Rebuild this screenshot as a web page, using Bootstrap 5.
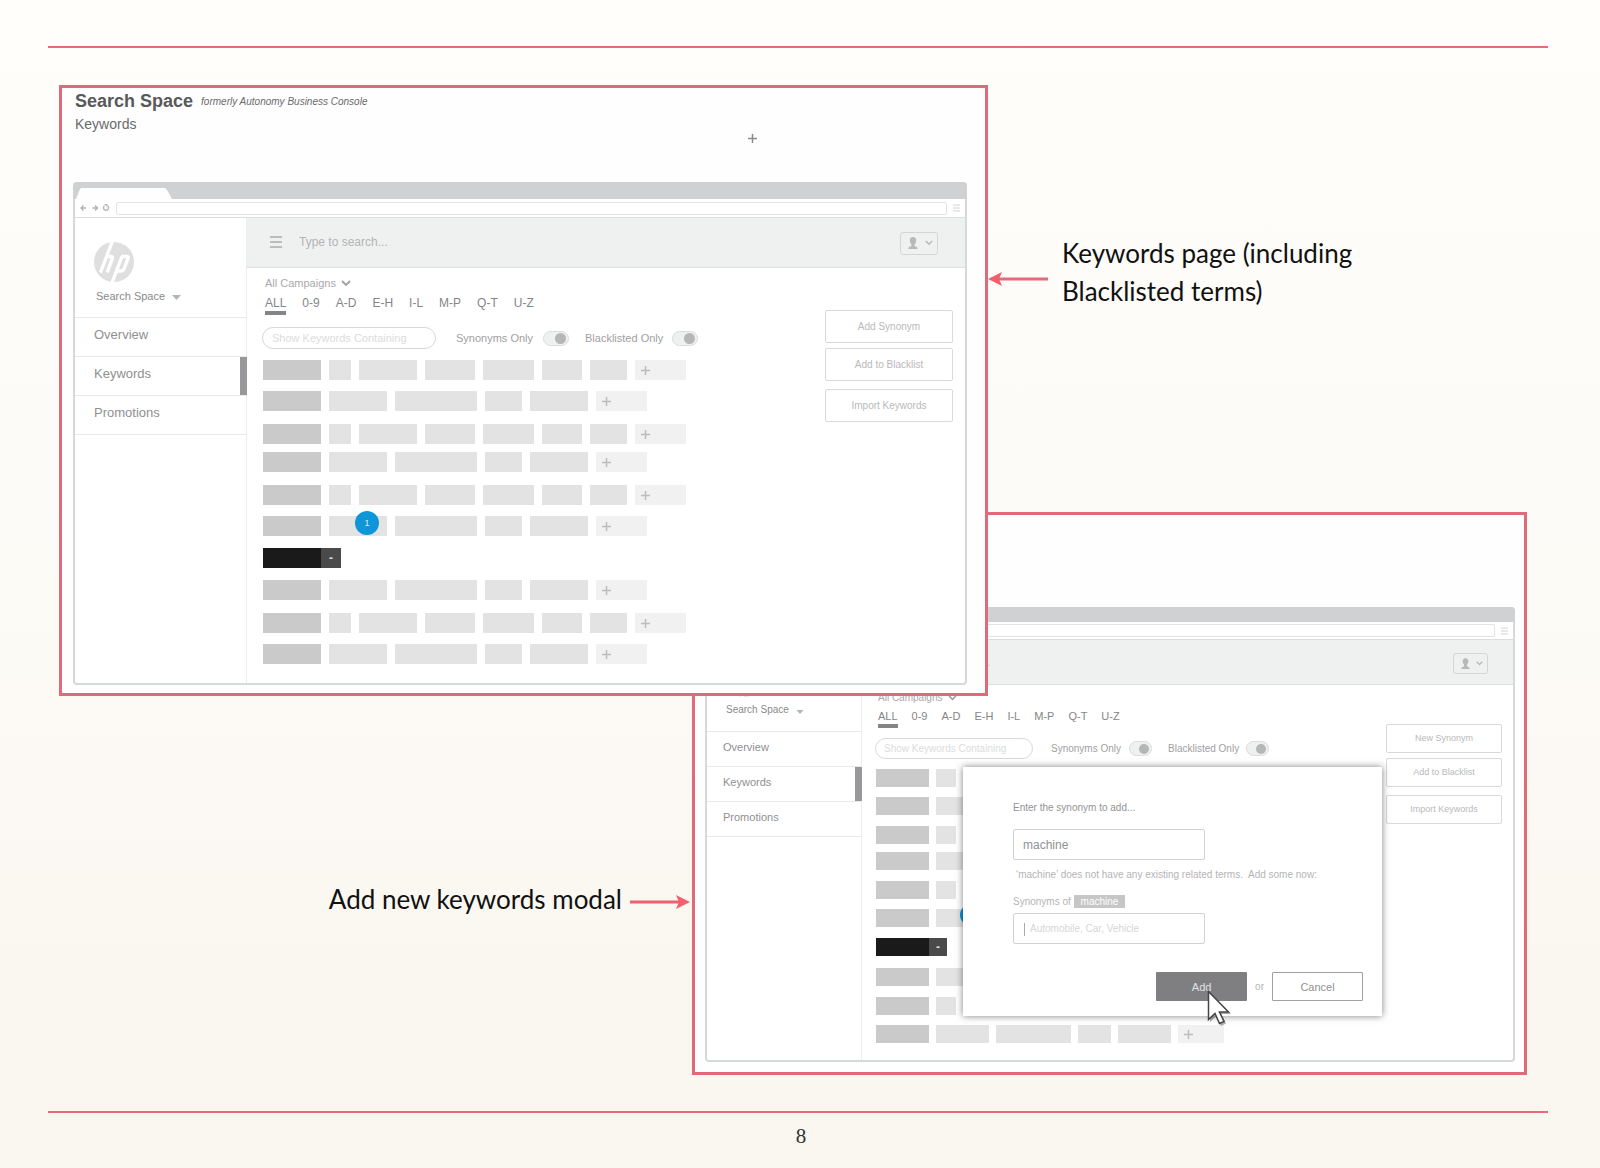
<!DOCTYPE html>
<html lang="en">
<head>
<meta charset="utf-8">
<meta name="viewport" content="width=device-width, initial-scale=1">
<title>Search Space – Keywords</title>
<link href="https://cdn.jsdelivr.net/npm/bootstrap@5.3.0/dist/css/bootstrap.min.css" rel="stylesheet">
<style>
  :root { --accent: #e66a78; }
  body {
    min-height: 100vh;
    padding: 46px 52px 0 48px;
    background: linear-gradient(#fffefa, #fdfbf7 45%, #faf7f0 85%, #faf7f1);
    font-family: "Liberation Sans", Arial, sans-serif;
    color: #58595b;
  }
  button, input, select { font-family: inherit; }
  .rule { height: 2px; background: var(--accent); }
  .stage { display: grid; grid-template-columns: 11fr 633fr 296fr 539fr 21fr; padding-bottom: 36px; }
  .stage > * { grid-row: 1; align-self: start; min-width: 0; }
  .pageno { font: 21px/26px "Liberation Serif", serif; color: #333; padding: 10px 0 0 6px; }

  /* callouts */
  .callout { font: 26px/38px Lato, sans-serif; color: #111; }
  .callout svg { flex: none; }
  .callout-page { grid-column: 4; margin-top: 186px; }
  .callout-page svg { margin-top: 38px; }
  .callout-page p { max-width: 320px; margin-left: 14px; }
  .callout-modal { grid-column: 2; margin-top: 832px; padding-right: 2px; }
  .callout-modal svg { margin-top: 15px; }

  /* wireframe, large size */
  .wire {
    --text: 11px; --line: 16px; --tabs: 12px; --nav: 13px; --search: 12px; --act: 10px;
    --gap: 8px; --chip-h: 20px; --a: 58px; --b: 22px; --c: 50px; --d: 51px; --e: 40px; --f: 37px; --g: 82px;
    --side: 172px; --strip: 17px; --url: 19px; --bar: 50px; --logo: 40px; --row: 39px;
    --field: 22px; --sw: 26px; --knob: 11px; --act-w: 128px; --act-h: 33px;
    border: 3px solid #e0697a; background: #fefefe;
  }
  .wire-lg { grid-column: 2 / 4; margin-top: 37px; z-index: 2; padding: 0 18px 8px 11px; }
  .wire-sm {
    --text: 10px; --line: 14px; --tabs: 11px; --nav: 11px; --search: 11px; --act: 9px;
    --gap: 7px; --chip-h: 18px; --a: 53px; --b: 20px; --c: 45px; --d: 46px; --e: 36px; --f: 33px; --g: 75px;
    --side: 155px; --strip: 15px; --url: 18px; --bar: 45px; --logo: 36px; --row: 35px;
    --field: 21px; --sw: 23px; --knob: 10px; --act-w: 116px; --act-h: 29px;
    grid-column: 3 / 5; margin-top: 464px; padding: 92px 9px 10px 10px;
  }
  .wire-head { height: 94px; padding: 3px 0 0 2px; position: relative; }
  .wire-head h1 { font-size: 18px; line-height: 20px; font-weight: 700; margin: 0; }
  .wire-head em { font-size: 10px; line-height: 22px; color: #6a6a6c; }
  .wire-head p { font-size: 14px; line-height: 22px; margin: 0; color: #6a6a6c; }
  .wire-head svg { position: absolute; left: 75.500%; top: 46px; }

  .browser { border: 2px solid #d6d9da; border-top: 0; border-radius: 4px; background: #fff; }
  .strip { height: var(--strip); background: #d0d1d2; border-radius: 4px 4px 0 0; margin: 0 -2px; padding-left: 3px; }
  .urlbar { height: var(--url); border-bottom: 1px solid #dcdfe0; padding: 0 5px; gap: 6px; }
  .urlbar input { height: 13px; min-width: 0; border: 1px solid #e3e3e3; border-radius: 2px; background: #fff; padding: 0; }
  .side { width: var(--side); flex: none; border-right: 1px solid #eceeee; }
  .side-head { padding: 24px 0 13px 19px; border-bottom: 1px solid #eaeaea; }
  .wire-sm .side-head { padding-top: 21px; padding-bottom: 14px; }
  .logo-art { width: var(--logo); height: var(--logo); display: block; margin-bottom: 6px; }
  .plainbtn { border: 0; background: none; padding: 0; color: #8a8a8c; font-size: var(--text); line-height: var(--line); }
  .side-head .plainbtn { margin-left: 2px; display: flex; align-items: center; gap: 7px; }
  .wire-sm .side-head .plainbtn { margin-left: 0; }
  .side-head .plainbtn svg { margin-top: 3px; }
  .side-link {
    display: flex; align-items: center; height: var(--row); padding: 0 0 4px 19px;
    border-bottom: 1px solid #eaeaea; color: #8f8f91; font-size: var(--nav); text-decoration: none;
  }
  .wire-sm .side-link { padding-left: 16px; }
  .side-link.current { background: linear-gradient(#98989a, #98989a) right / 7px 100% no-repeat; margin-right: -1px; }
  .topbar { height: var(--bar); background: #eff1f1; border-bottom: 1px solid #dcdfe0; padding: 0 27px 2px 23px; }
  .wire-sm .topbar { padding: 0 25px 0 21px; }
  .topbar input { border: 0; background: none; font-size: var(--search); color: #aaa; padding: 0; margin-left: 17px; min-width: 0; }
  .wire-sm .topbar input { margin-left: 15px; }
  .topbar input::placeholder { color: #b4b4b4; opacity: 1; }
  .usermenu { width: 38px; height: 23px; border: 1px solid #d3d5d6; border-radius: 3px; background: none; padding: 0 4px 0 7px; margin-top: 3px; }
  .wire-sm .usermenu { width: 35px; height: 21px; }

  .board { padding: 7px 0 19px 15px; }
  .wire-sm .board { padding: 6px 0 17px 13px; }
  .campaign { margin-left: 3px; height: var(--line); }
  .campaign select { appearance: none; border: 0; background: none; padding: 0; margin-right: 5px; color: #a9a9ab; font-size: var(--text); line-height: var(--line); }
  .letters { margin: 4px 0 0 3px; gap: 16px; font-size: var(--tabs); line-height: 16px; }
  .wire-sm .letters { gap: 14px; line-height: 15px; }
  .letters a { color: #858587; text-decoration: none; border-bottom: 4px solid transparent; }
  .letters a.current { border-color: #858587; }
  .filters { margin: 12px 0 11px; height: var(--field); font-size: var(--text); color: #a0a0a2; }
  .wire-sm .filters { margin: 10px 0; }
  .filters input[type=text] { width: 174px; height: var(--field); border: 1px solid #d8d8d8; border-radius: 11px; padding: 0 9px; margin-right: 20px; background: #fff; }
  .wire-sm .filters input[type=text] { width: 158px; margin-right: 18px; padding: 0 8px; }
  .filters input::placeholder { color: #dcdcdc; opacity: 1; }
  .filters label { width: 87px; }
  .filters label.wide { margin-left: 16px; }
  .wire-sm .filters label { width: 78px; }
  .switch { appearance: none; width: var(--sw); height: 15px; margin: 0; border: 1px solid #dadcdd; border-radius: 8px; background: #eff0f0;
            display: flex; align-items: center; justify-content: flex-end; padding-right: 2px; }
  .switch::before { content: ""; width: var(--knob); height: var(--knob); border-radius: 50%; background: #b6b6b7; }

  .terms { margin-left: 1px; }
  .term-row { display: flex; gap: var(--gap); margin-top: 13px; position: relative; }
  .term-row.short { margin-top: 11px; }
  .term-row.tight { margin-top: 8px; }
  .term-row.black, .term-row.black + .short { margin-top: 12px; }
  .wire-sm .term-row { margin-top: 11px; }
  .wire-sm .term-row.short { margin-top: 10px; }
  .wire-sm .term-row.tight { margin-top: 8px; }
  .wire-sm .term-row.black + .short { margin-top: 12px; }
  .wire .term-row:first-child { margin-top: 0; }
  .wire .term-row.black { gap: 0; }
  .chip { height: var(--chip-h); background: #e3e3e3; border: 0; padding: 0; flex: none; }
  .chip.head { background: #cacaca; }
  .chip.dark { background: #1a1a1a; }
  .chip.minus { width: 20px; background: #4a4a4a; color: #ddd; font-size: 12px; font-weight: 700; line-height: 1; }
  .wire-sm .chip.minus { width: 18px; }
  .chip.plus { background: #f1f1f1; padding-left: 6px; display: flex; align-items: center; }
  .s-a { width: var(--a); } .s-b { width: var(--b); } .s-c { width: var(--c); } .s-d { width: var(--d); }
  .s-e { width: var(--e); } .s-f { width: var(--f); } .s-g { width: var(--g); }
  .pin { position: absolute; left: 92px; top: -5px; width: 24px; height: 24px; border-radius: 50%; background: #0d96d8; color: #d8f0fb; font-size: 9px; line-height: 24px; text-align: center; }
  .wire-sm .pin { left: 84px; width: 22px; height: 22px; line-height: 22px; }

  .actions { width: var(--act-w); flex: none; margin: 42px 12px 0 0; }
  .wire-sm .actions { margin: 39px 11px 0 0; }
  .actions button { height: var(--act-h); border: 1px solid #d9d9d9; border-radius: 2px; background: #fff; color: #b9b9bb; font-size: var(--act); padding: 0; margin-bottom: 5px; }
  .actions button:nth-child(2) { margin-bottom: 8px; }

  /* dialog over the small wireframe */
  .dialog { position: absolute; left: 101px; top: 127px; width: 419px; padding: 33px 19px 15px 50px; background: #fff; box-shadow: 0 0 7px rgba(0,0,0,.5); font-size: 10px; line-height: 16px; color: #b4b4b6; z-index: 1; }
  .dialog .prompt { display: block; color: #939395; }
  .dialog .entry { display: block; width: 192px; height: 31px; border: 1px solid #d2d2d2; border-radius: 2px; background: #fff; color: #919193; font-size: 12px; padding: 0 9px; margin-top: 13px; }
  .dialog .related { margin: 7px 0 11px; padding-left: 3px; white-space: pre; }
  .dialog .token { background: #c6c6c6; color: #fff; padding: 0 7px; line-height: 13px; }
  .dialog .entry-wrap { position: relative; margin-top: 3px; }
  .dialog .entry-wrap .entry { margin: 0; font-size: 10px; padding-left: 16px; }
  .dialog .entry-wrap::before { content: ""; position: absolute; left: 11px; top: 10px; width: 1px; height: 13px; background: #aaa; }
  .dialog .entry::placeholder { color: #d6d6d6; opacity: 1; }
  .dialog .buttons { margin-top: 28px; gap: 8px; position: relative; }
  .dialog .buttons button { width: 91px; height: 29px; border-radius: 1px; font-size: 11px; padding: 0; }
  .ok { background: #7f7f81; border: 0; color: #e2e2e2; }
  .no { background: #fff; border: 1px solid #a0a0a0; color: #919193; }
  .pointer { position: absolute; right: 130px; top: 18px; }
</style>
</head>
<body>
<svg class="d-none">
  <symbol id="hp" viewBox="0 0 40 40">
    <circle cx="20" cy="20" r="20" fill="#dfdfdf"/>
    <g fill="none" stroke="#fff" stroke-width="3.4">
      <path d="M18.5-1 6.5 30.500M12.500 14.500h4.200q2.300 0 1.600 2.200L13.200 30.500"/>
      <path d="M28 14.500 17.500 42M27 14.500h5.500q2.200 0 1.500 2.200L30.200 26.500q-.8 2.500-3.200 2.500H22"/>
    </g>
  </symbol>
  <symbol id="lines" viewBox="0 0 12 12"><path d="M0 1h12M0 6h12M0 11h12" stroke="currentColor" stroke-width="1.500"/></symbol>
  <symbol id="chev" viewBox="0 0 10 7"><path d="M1 1l4 4 4-4" fill="none" stroke="currentColor" stroke-width="1.800"/></symbol>
  <symbol id="caret" viewBox="0 0 9 5"><path d="M0 0h9L4.500 5z" fill="currentColor"/></symbol>
  <symbol id="user" viewBox="0 0 10 13"><path d="M5 0c2.200 0 3.300 1.500 3.200 3.500C8.100 5.500 7.200 6.500 6.600 7.300v1.500c.3.800 3 .8 3 3.200H.4c0-2.400 2.700-2.400 3-3.200V7.300C2.800 6.500 1.900 5.500 1.800 3.500 1.700 1.500 2.800 0 5 0z" fill="currentColor"/></symbol>
  <symbol id="plus" viewBox="0 0 9 9"><path d="M4.500 0v9M0 4.500h9" stroke="currentColor" stroke-width="1.500"/></symbol>
  <symbol id="nav" viewBox="0 0 30 8">
    <g fill="none" stroke="#b4b4b4" stroke-width="1.400"><path d="M6 4H1.500M3.500 1.500 1 4l2.500 2.500M12.500 4H17M15 1.500 17.500 4 15 6.500"/><path d="M24.500 1.800a2.500 2.500 0 1 0 3 0"/></g><path d="M24 0h3.500v3z" fill="#b4b4b4"/>
  </symbol>
</svg>

<div class="rule"></div>
<main class="stage">

  <section class="wire wire-lg">
    <header class="wire-head">
      <div class="d-flex gap-2"><h1>Search Space</h1><em>formerly Autonomy Business Console</em></div>
      <p>Keywords</p>
      <svg width="9" height="9" color="#8a8a8a"><use href="#plus"/></svg>
    </header>
    <div class="browser">
      <div class="strip d-flex align-items-end"><svg width="97" height="11"><path d="M0 11 4 1q1-1 2-1h82q2 0 3 2l5 9z" fill="#fefefe"/></svg></div>
      <div class="urlbar d-flex align-items-center"><svg width="30" height="8"><use href="#nav"/></svg><input class="flex-fill" type="text" aria-label="Address"><svg width="7" height="8" color="#ccc"><use href="#lines"/></svg></div>
      <div class="d-flex">
        <nav class="side">
          <div class="side-head"><svg class="logo-art"><use href="#hp"/></svg><button class="plainbtn" type="button">Search Space <svg width="9" height="5" color="#b5b5b5"><use href="#caret"/></svg></button></div>
          <a class="side-link" href="#overview">Overview</a>
          <a class="side-link current" href="#keywords">Keywords</a>
          <a class="side-link" href="#promotions">Promotions</a>
        </nav>
        <div class="flex-fill">
          <div class="topbar d-flex align-items-center"><svg width="12" height="12" color="#aaa"><use href="#lines"/></svg><input class="flex-fill" type="text" placeholder="Type to search..." aria-label="Search">
            <button class="usermenu d-flex align-items-center justify-content-between" type="button" aria-label="Account"><svg width="10" height="13" color="#b8b8b8"><use href="#user"/></svg><svg width="8" height="6" color="#b8b8b8"><use href="#chev"/></svg></button></div>
          <div class="d-flex justify-content-between">
            <div class="board">
              <div class="campaign d-flex align-items-center"><select aria-label="Campaign"><option>All Campaigns</option></select><svg width="10" height="7" color="#a0a0a0"><use href="#chev"/></svg></div>
              <div class="letters d-flex"><a class="current" href="#all">ALL</a><a href="#09">0-9</a><a href="#ad">A-D</a><a href="#eh">E-H</a><a href="#il">I-L</a><a href="#mp">M-P</a><a href="#qt">Q-T</a><a href="#uz">U-Z</a></div>
              <div class="filters d-flex align-items-center"><input type="text" placeholder="Show Keywords Containing" aria-label="Show keywords containing"><label for="syn1">Synonyms Only</label><input class="switch" id="syn1" type="checkbox" role="switch" checked><label class="wide" for="bl1">Blacklisted Only</label><input class="switch" id="bl1" type="checkbox" role="switch" checked></div>
              <div class="terms"></div>
            </div>
            <div class="actions d-flex flex-column"><button type="button">Add Synonym</button><button type="button">Add to Blacklist</button><button type="button">Import Keywords</button></div>
          </div>
        </div>
      </div>
    </div>
  </section>

  <section class="wire wire-sm">
    <div class="browser">
      <div class="strip"></div>
      <div class="urlbar d-flex align-items-center"><svg width="27" height="7"><use href="#nav"/></svg><input class="flex-fill" type="text" aria-label="Address"><svg width="7" height="8" color="#ccc"><use href="#lines"/></svg></div>
      <div class="d-flex">
        <nav class="side">
          <div class="side-head"><svg class="logo-art"><use href="#hp"/></svg><button class="plainbtn" type="button">Search Space <svg width="8" height="4" color="#b5b5b5"><use href="#caret"/></svg></button></div>
          <a class="side-link" href="#overview">Overview</a>
          <a class="side-link current" href="#keywords">Keywords</a>
          <a class="side-link" href="#promotions">Promotions</a>
        </nav>
        <div class="flex-fill position-relative">
          <div class="topbar d-flex align-items-center"><svg width="11" height="11" color="#aaa"><use href="#lines"/></svg><input class="flex-fill" type="text" placeholder="Type to search..." aria-label="Search">
            <button class="usermenu d-flex align-items-center justify-content-between" type="button" aria-label="Account"><svg width="9" height="12" color="#b8b8b8"><use href="#user"/></svg><svg width="7" height="5" color="#b8b8b8"><use href="#chev"/></svg></button></div>
          <div class="d-flex justify-content-between">
            <div class="board">
              <div class="campaign d-flex align-items-center"><select aria-label="Campaign"><option>All Campaigns</option></select><svg width="9" height="6" color="#a0a0a0"><use href="#chev"/></svg></div>
              <div class="letters d-flex"><a class="current" href="#all">ALL</a><a href="#09">0-9</a><a href="#ad">A-D</a><a href="#eh">E-H</a><a href="#il">I-L</a><a href="#mp">M-P</a><a href="#qt">Q-T</a><a href="#uz">U-Z</a></div>
              <div class="filters d-flex align-items-center"><input type="text" placeholder="Show Keywords Containing" aria-label="Show keywords containing"><label for="syn2">Synonyms Only</label><input class="switch" id="syn2" type="checkbox" role="switch" checked><label class="wide" for="bl2">Blacklisted Only</label><input class="switch" id="bl2" type="checkbox" role="switch" checked></div>
              <div class="terms"></div>
            </div>
            <div class="actions d-flex flex-column"><button type="button">New Synonym</button><button type="button">Add to Blacklist</button><button type="button">Import Keywords</button></div>
          </div>
          <form class="dialog" onsubmit="return false">
            <label class="prompt" for="word">Enter the synonym to add...</label>
            <input class="entry" id="word" type="text" value="machine">
            <p class="related">‘machine’ does not have any existing related terms.  Add some now:</p>
            <label for="syns">Synonyms of <span class="token d-inline-block">machine</span></label>
            <div class="entry-wrap"><input class="entry" id="syns" type="text" placeholder="Automobile, Car, Vehicle"></div>
            <div class="buttons d-flex justify-content-end align-items-center">
              <button class="ok" type="submit">Add</button><span>or</span><button class="no" type="button">Cancel</button>
              <svg class="pointer" width="26" height="36" viewBox="0 0 26 36"><path d="M3 3v29l6.500-6 4.500 10 5-2.500-4.500-9.500H24z" fill="#555" opacity=".5"/><path d="M1.500 1.500v28l6.500-6 4.500 10 4.500-2-4.500-9.500h9z" fill="#fff" stroke="#444" stroke-width="1.500"/></svg>
            </div>
          </form>
        </div>
      </div>
    </div>
  </section>

  <div class="callout callout-page d-flex">
    <svg width="60" height="14" viewBox="0 0 60 14"><path d="M10 7h50" stroke="#e66a78" stroke-width="3"/><path d="M0 7 14 0l-3 7 3 7z" fill="#f2606d"/></svg>
    <p class="mb-0">Keywords page (including Blacklisted terms)</p>
  </div>
  <div class="callout callout-modal d-flex justify-content-end">
    <p class="mb-0 me-2">Add new keywords modal</p>
    <svg width="60" height="14" viewBox="0 0 60 14"><path d="M0 7h50" stroke="#f2606d" stroke-width="3"/><path d="M60 7 46 0l3 7-3 7z" fill="#f2606d"/></svg>
  </div>
</main>
<div class="rule"></div>
<footer class="pageno text-center">8</footer>

<script src="https://cdn.jsdelivr.net/npm/bootstrap@5.3.0/dist/js/bootstrap.bundle.min.js"></script>
<script>
  // each row: extra class, then the size letters of its related terms
  const rows = [["", "bacdef"], ["short", "agfa"], ["", "bacdef"], ["short tight", "agfa"], ["", "bacdef"],
                ["short", "agfa", true], ["black", null], ["short", "agfa"], ["", "bacdef"], ["short", "agfa"]];
  const html = rows.map(([cls, sizes, pin]) => {
    if (!sizes) return `<div class="term-row ${cls}"><span class="chip dark s-a"></span><button class="chip minus" type="button">-</button></div>`;
    return `<div class="term-row ${cls}"><span class="chip head s-a"></span>` +
      [...sizes].map(s => `<span class="chip s-${s}"></span>`).join("") +
      `<button class="chip plus s-d" type="button" aria-label="Add term"><svg width="9" height="9" color="#bdbdbd"><use href="#plus"/></svg></button>` +
      (pin ? `<span class="pin">1</span>` : "") + `</div>`;
  }).join("");
  document.querySelectorAll(".terms").forEach(el => el.innerHTML = html);
</script>
</body>
</html>
